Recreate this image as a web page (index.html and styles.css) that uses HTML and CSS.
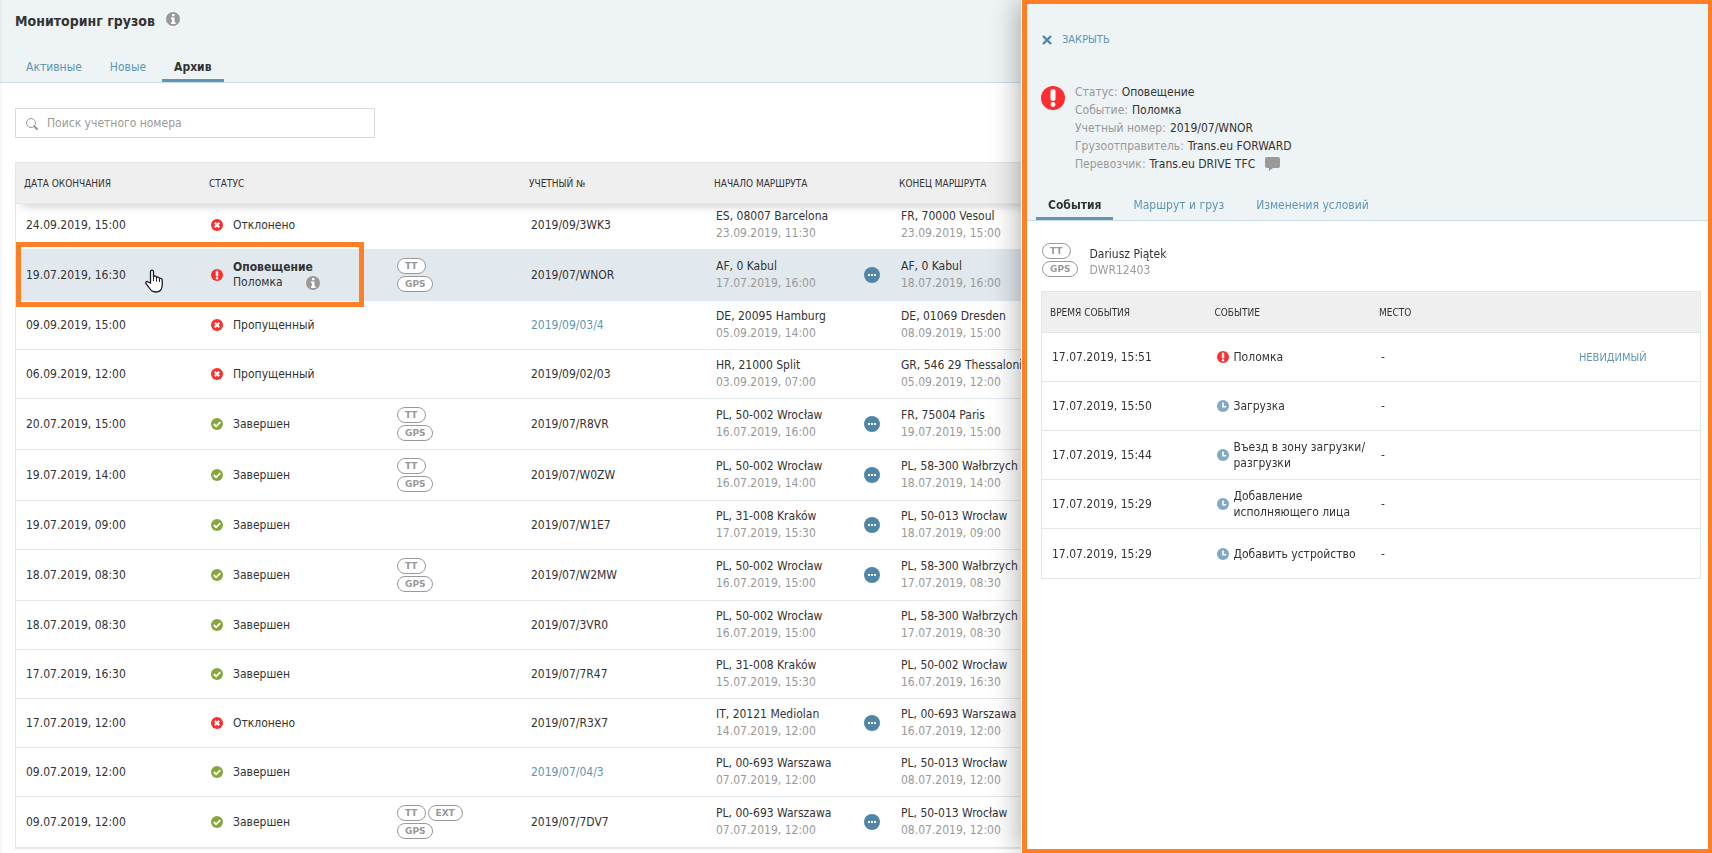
FILE: index.html
```
<!DOCTYPE html>
<html lang="ru">
<head>
    <meta charset="UTF-8">
    <meta name="viewport" content="width=device-width, initial-scale=1.0">
    <title>Мониторинг грузов</title>
    <link rel="stylesheet" href="styles.css">
</head>
<body>
    <!-- icons -->
    <svg class="sprite" aria-hidden="true">
        <symbol id="i-info" viewBox="0 0 14 14">
            <circle cx="7" cy="7" r="7" fill="#999"/>
            <path d="M6 2h2.5v2.2H6zM5 5.5h3.5v4.6h1V12H5v-1.9h1V7.2H5z" fill="#fff"/>
        </symbol>
        <symbol id="i-fail" viewBox="0 0 12 12">
            <circle cx="6" cy="6" r="6" fill="#ff2d2d"/>
            <path d="M3.8 3.800l4.400 4.400M8.200 3.800L3.800 8.200" stroke="#fff" stroke-width="2.200"/>
        </symbol>
        <symbol id="i-done" viewBox="0 0 12 12">
            <circle cx="6" cy="6" r="6" fill="#86a73c"/>
            <path d="M2.8 6l2.3 2.3 4.2-4.2" fill="none" stroke="#fff" stroke-width="1.8"/>
        </symbol>
        <symbol id="i-alert" viewBox="0 0 24 24">
            <circle cx="12" cy="12" r="12" fill="#ff2d2d"/>
            <rect x="9.5" y="3" width="5" height="12" rx="2.5" fill="#fff"/>
            <circle cx="12" cy="18.5" r="2.4" fill="#fff"/>
        </symbol>
        <symbol id="i-clock" viewBox="0 0 12 12">
            <circle cx="6" cy="6" r="6" fill="#81a9c3"/>
            <path d="M6 2.5v4.3h3.2" fill="none" stroke="#fff" stroke-width="1.6"/>
        </symbol>
        <symbol id="i-dots" viewBox="0 0 16 16">
            <circle cx="8" cy="8" r="8" fill="#5086a5"/>
            <path d="M4 7h2v2H4zM7 7h2v2H7zM10 7h2v2h-2z" fill="#fff"/>
        </symbol>
    </svg>

    <main class="monitor">
        <header class="page-header">
            <h1>Мониторинг грузов <svg class="icon info"><use href="#i-info"/></svg></h1>
            <nav class="tabs">
                <a href="#">Активные</a>
                <a href="#">Новые</a>
                <a href="#" class="active">Архив</a>
            </nav>
        </header>

        <div class="content">
            <label class="search">
                <svg viewBox="0 0 12 12"><circle cx="5" cy="5" r="4.5" fill="none" stroke="#999"/><path d="M8.2 8.2l3 3" stroke="#999" stroke-width="2" stroke-linecap="round"/></svg>
                <input type="text" placeholder="Поиск учетного номера" aria-label="Поиск учетного номера">
            </label>

            <table class="cargo">
                <colgroup>
                    <col class="col"><col class="col"><col class="col-tags"><col class="col"><col class="col-start"><col class="col-dots"><col>
                </colgroup>
                <thead>
                    <tr><th>Дата окончания</th><th>Статус</th><th></th><th>Учетный №</th><th>Начало маршрута</th><th></th><th>Конец маршрута</th></tr>
                </thead>
                <tbody>
                    <tr class="scrolled">
                        <td>24.09.2019, 15:00</td>
                        <td><div class="status"><svg class="icon"><use href="#i-fail"/></svg>Отклонено</div></td>
                        <td class="tags"></td>
                        <td>2019/09/3WK3</td>
                        <td>ES, 08007 Barcelona<small>23.09.2019, 11:30</small></td>
                        <td></td>
                        <td>FR, 70000 Vesoul<small>23.09.2019, 15:00</small></td>
                    </tr>
                    <tr class="selected">
                        <td class="marked">19.07.2019, 16:30
                            <svg class="cursor" viewBox="0 0 18 24"><path d="M5.5 14V2.8C5.5.6 8.5.6 8.5 2.8V8c0-1.5 3-1.5 3 .5V9c0-1.5 3-1.3 3 .7v.5c0-1.3 2.7-1.3 2.7.6V16c0 4-2 7-6.7 7-4 0-5.5-2.5-7-5.2L.9 14.5c-.8-1.6 1-2.7 2.2-1.5z" fill="#fff" stroke="#1b1b2a" stroke-width="1.3"/><path d="M8.5 8v4M11.5 9v3.5M14.5 10v3" stroke="#1b1b2a"/></svg>
                        </td>
                        <td><div class="status"><svg class="icon"><use href="#i-alert"/></svg><div class="reason"><b>Оповещение</b><span>Поломка <svg class="icon info"><use href="#i-info"/></svg></span></div></div></td>
                        <td class="tags"><span class="tag">TT</span><br><span class="tag">GPS</span></td>
                        <td>2019/07/WNOR</td>
                        <td>AF, 0 Kabul<small>17.07.2019, 16:00</small></td>
                        <td><svg class="dots"><use href="#i-dots"/></svg></td>
                        <td>AF, 0 Kabul<small>18.07.2019, 16:00</small></td>
                    </tr>
                    <tr>
                        <td>09.09.2019, 15:00</td>
                        <td><div class="status"><svg class="icon"><use href="#i-fail"/></svg>Пропущенный</div></td>
                        <td class="tags"></td>
                        <td><a href="#">2019/09/03/4</a></td>
                        <td>DE, 20095 Hamburg<small>05.09.2019, 14:00</small></td>
                        <td></td>
                        <td>DE, 01069 Dresden<small>08.09.2019, 15:00</small></td>
                    </tr>
                    <tr>
                        <td>06.09.2019, 12:00</td>
                        <td><div class="status"><svg class="icon"><use href="#i-fail"/></svg>Пропущенный</div></td>
                        <td class="tags"></td>
                        <td>2019/09/02/03</td>
                        <td>HR, 21000 Split<small>03.09.2019, 07:00</small></td>
                        <td></td>
                        <td>GR, 546 29 Thessaloniki<small>05.09.2019, 12:00</small></td>
                    </tr>
                    <tr>
                        <td>20.07.2019, 15:00</td>
                        <td><div class="status"><svg class="icon"><use href="#i-done"/></svg>Завершен</div></td>
                        <td class="tags"><span class="tag">TT</span><br><span class="tag">GPS</span></td>
                        <td>2019/07/R8VR</td>
                        <td>PL, 50-002 Wrocław<small>16.07.2019, 16:00</small></td>
                        <td><svg class="dots"><use href="#i-dots"/></svg></td>
                        <td>FR, 75004 Paris<small>19.07.2019, 15:00</small></td>
                    </tr>
                    <tr>
                        <td>19.07.2019, 14:00</td>
                        <td><div class="status"><svg class="icon"><use href="#i-done"/></svg>Завершен</div></td>
                        <td class="tags"><span class="tag">TT</span><br><span class="tag">GPS</span></td>
                        <td>2019/07/W0ZW</td>
                        <td>PL, 50-002 Wrocław<small>16.07.2019, 14:00</small></td>
                        <td><svg class="dots"><use href="#i-dots"/></svg></td>
                        <td>PL, 58-300 Wałbrzych<small>18.07.2019, 14:00</small></td>
                    </tr>
                    <tr>
                        <td>19.07.2019, 09:00</td>
                        <td><div class="status"><svg class="icon"><use href="#i-done"/></svg>Завершен</div></td>
                        <td class="tags"></td>
                        <td>2019/07/W1E7</td>
                        <td>PL, 31-008 Kraków<small>17.07.2019, 15:30</small></td>
                        <td><svg class="dots"><use href="#i-dots"/></svg></td>
                        <td>PL, 50-013 Wrocław<small>18.07.2019, 09:00</small></td>
                    </tr>
                    <tr>
                        <td>18.07.2019, 08:30</td>
                        <td><div class="status"><svg class="icon"><use href="#i-done"/></svg>Завершен</div></td>
                        <td class="tags"><span class="tag">TT</span><br><span class="tag">GPS</span></td>
                        <td>2019/07/W2MW</td>
                        <td>PL, 50-002 Wrocław<small>16.07.2019, 15:00</small></td>
                        <td><svg class="dots"><use href="#i-dots"/></svg></td>
                        <td>PL, 58-300 Wałbrzych<small>17.07.2019, 08:30</small></td>
                    </tr>
                    <tr>
                        <td>18.07.2019, 08:30</td>
                        <td><div class="status"><svg class="icon"><use href="#i-done"/></svg>Завершен</div></td>
                        <td class="tags"></td>
                        <td>2019/07/3VR0</td>
                        <td>PL, 50-002 Wrocław<small>16.07.2019, 15:00</small></td>
                        <td></td>
                        <td>PL, 58-300 Wałbrzych<small>17.07.2019, 08:30</small></td>
                    </tr>
                    <tr>
                        <td>17.07.2019, 16:30</td>
                        <td><div class="status"><svg class="icon"><use href="#i-done"/></svg>Завершен</div></td>
                        <td class="tags"></td>
                        <td>2019/07/7R47</td>
                        <td>PL, 31-008 Kraków<small>15.07.2019, 15:30</small></td>
                        <td></td>
                        <td>PL, 50-002 Wrocław<small>16.07.2019, 16:30</small></td>
                    </tr>
                    <tr>
                        <td>17.07.2019, 12:00</td>
                        <td><div class="status"><svg class="icon"><use href="#i-fail"/></svg>Отклонено</div></td>
                        <td class="tags"></td>
                        <td>2019/07/R3X7</td>
                        <td>IT, 20121 Mediolan<small>14.07.2019, 12:00</small></td>
                        <td><svg class="dots"><use href="#i-dots"/></svg></td>
                        <td>PL, 00-693 Warszawa<small>16.07.2019, 12:00</small></td>
                    </tr>
                    <tr>
                        <td>09.07.2019, 12:00</td>
                        <td><div class="status"><svg class="icon"><use href="#i-done"/></svg>Завершен</div></td>
                        <td class="tags"></td>
                        <td><a href="#">2019/07/04/3</a></td>
                        <td>PL, 00-693 Warszawa<small>07.07.2019, 12:00</small></td>
                        <td></td>
                        <td>PL, 50-013 Wrocław<small>08.07.2019, 12:00</small></td>
                    </tr>
                    <tr>
                        <td>09.07.2019, 12:00</td>
                        <td><div class="status"><svg class="icon"><use href="#i-done"/></svg>Завершен</div></td>
                        <td class="tags"><span class="tag">TT</span><span class="tag">EXT</span><br><span class="tag">GPS</span></td>
                        <td>2019/07/7DV7</td>
                        <td>PL, 00-693 Warszawa<small>07.07.2019, 12:00</small></td>
                        <td><svg class="dots"><use href="#i-dots"/></svg></td>
                        <td>PL, 50-013 Wrocław<small>08.07.2019, 12:00</small></td>
                    </tr>
                </tbody>
            </table>
        </div>
    </main>

    <aside class="panel">
        <header class="panel-header">
            <button type="button" class="close"><svg viewBox="0 0 10 10"><path d="M1 1l8 8M9 1L1 9" stroke="#5086a5" stroke-width="2.4"/></svg>Закрыть</button>
            <div class="summary">
                <svg class="alert-big"><use href="#i-alert"/></svg>
                <dl>
                    <div><dt>Статус:</dt><dd>Оповещение</dd></div>
                    <div><dt>Событие:</dt><dd>Поломка</dd></div>
                    <div><dt>Учетный номер:</dt><dd>2019/07/WNOR</dd></div>
                    <div><dt>Грузоотправитель:</dt><dd>Trans.eu FORWARD</dd></div>
                    <div><dt>Перевозчик:</dt><dd>Trans.eu DRIVE TFC <svg class="chat" viewBox="0 0 15 14"><path d="M2 0h11a2 2 0 0 1 2 2v7a2 2 0 0 1-2 2H8l-4 3v-3H2a2 2 0 0 1-2-2V2a2 2 0 0 1 2-2z" fill="#999"/></svg></dd></div>
                </dl>
            </div>
            <nav class="tabs">
                <a href="#" class="active">События</a>
                <a href="#">Маршрут и груз</a>
                <a href="#">Изменения условий</a>
            </nav>
        </header>

        <div class="panel-body">
            <div class="driver">
                <div class="tags"><span class="tag">TT</span><br><span class="tag">GPS</span></div>
                <p>Dariusz Piątek<small>DWR12403</small></p>
            </div>
            <table class="events">
                <thead>
                    <tr><th>Время события</th><th>Событие</th><th>Место</th><th></th></tr>
                </thead>
                <tbody>
                    <tr>
                        <td>17.07.2019, 15:51</td>
                        <td><div class="event"><svg class="icon"><use href="#i-alert"/></svg>Поломка</div></td>
                        <td>-</td>
                        <td class="action"><button type="button">Невидимый</button></td>
                    </tr>
                    <tr>
                        <td>17.07.2019, 15:50</td>
                        <td><div class="event"><svg class="icon"><use href="#i-clock"/></svg>Загрузка</div></td>
                        <td>-</td>
                        <td></td>
                    </tr>
                    <tr>
                        <td>17.07.2019, 15:44</td>
                        <td><div class="event"><svg class="icon"><use href="#i-clock"/></svg><span>Въезд в зону загрузки/<br>разгрузки</span></div></td>
                        <td>-</td>
                        <td></td>
                    </tr>
                    <tr>
                        <td>17.07.2019, 15:29</td>
                        <td><div class="event"><svg class="icon"><use href="#i-clock"/></svg><span>Добавление<br>исполняющего лица</span></div></td>
                        <td>-</td>
                        <td></td>
                    </tr>
                    <tr>
                        <td>17.07.2019, 15:29</td>
                        <td><div class="event"><svg class="icon"><use href="#i-clock"/></svg>Добавить устройство</div></td>
                        <td>-</td>
                        <td></td>
                    </tr>
                </tbody>
            </table>
        </div>
    </aside>
</body>
</html>
```
FILE: styles.css
```
* {
    margin: 0;
    padding: 0;
    box-sizing: border-box;
}

body {
    min-height: 100vh;
    overflow: hidden;
    background: #fff;
    color: #333;
    font-family: "DejaVu Sans Condensed", "DejaVu Sans", sans-serif;
    font-size: 12px;
    line-height: 17px;
}

a {
    color: #6096b4;
    text-decoration: none;
}

button {
    background: none;
    border: none;
    color: #6096b4;
    font: inherit;
    text-transform: uppercase;
    cursor: pointer;
}

.sprite {
    position: absolute;
    width: 0;
    height: 0;
}

.icon {
    flex: none;
    width: 12px;
    height: 12px;
}

.icon.info {
    width: 14px;
    height: 14px;
}

small {
    display: block;
    color: #999;
    font-size: 12px;
}

/* page */
.monitor {
    min-height: 100vh;
    box-shadow: inset 3px 0 3px -2px rgba(0, 0, 0, 0.06);
}

.page-header {
    padding: 12px 14px 0;
    background: #eef3f6;
    border-bottom: 1px solid #c9dde7;
    box-shadow: inset 3px 0 3px -2px rgba(0, 0, 0, 0.06);
}

h1 {
    display: flex;
    gap: 11px;
    height: 46px;
    padding-left: 1px;
    font-size: 14px;
    line-height: 18px;
}

.tabs {
    display: flex;
}

.tabs a {
    height: 24px;
    padding: 1px 12px 0;
    border-bottom: 3px solid transparent;
}

.tabs .active {
    border-color: #6096b4;
    color: #333;
    font-weight: bold;
}

.page-header .tabs {
    gap: 4px;
}

.content {
    padding: 25px 15px 0;
}

.search {
    display: flex;
    align-items: center;
    width: 360px;
    height: 30px;
    padding: 1px 10px 0;
    border: 1px solid #d8d8d8;
    border-radius: 1px;
}

.search svg {
    width: 12px;
    height: 12px;
    margin-right: 9px;
}

.search input {
    flex: 1;
    border: none;
    outline: none;
    font: inherit;
}

.search input::placeholder {
    color: #999;
}

/* tables */
table {
    width: 100%;
    border: 1px solid #e1e8ed;
    border-spacing: 0;
    table-layout: fixed;
}

th {
    height: 41px;
    padding: 0 8px;
    background: #efefef;
    border-bottom: 1px solid #e1e8ed;
    font-size: 10px;
    font-weight: normal;
    text-align: left;
    text-transform: uppercase;
    white-space: nowrap;
}

td {
    height: 49px;
    padding: 7px 10px;
    border-bottom: 1px solid #e1e8ed;
    white-space: nowrap;
}

.cargo {
    margin-top: 24px;
}

.cargo thead {
    position: relative;
    z-index: 1;
    box-shadow: 0 8px 10px -6px rgba(0, 0, 0, 0.2);
}

.col {
    width: 185px;
}

.col-tags {
    width: 135px;
}

.col-start {
    width: 148px;
}

.col-dots {
    width: 37px;
}

.scrolled td {
    height: 46px;
    padding-top: 4px;
    border-color: #e1e8ee;
}

.selected td {
    background: #e1e8ee;
}

.status {
    display: flex;
    align-items: center;
    gap: 10px;
}

.reason {
    line-height: 15px;
}

.reason b,
.reason span {
    display: block;
}

.reason .info {
    margin: 0 0 -4px 20px;
}

.tags {
    line-height: 0;
}

td.tags {
    padding: 8px 10px 6px 11px;
}

.tag {
    display: inline-block;
    height: 16px;
    margin: 0 2px 2px 0;
    padding: 0 7px;
    border: 1px solid #999;
    border-radius: 8px;
    background: #fff;
    color: #999;
    font: bold 9px/14px "DejaVu Sans", sans-serif;
    vertical-align: top;
}

.dots {
    display: block;
    width: 16px;
    height: 16px;
}

/* frame round the date and status of the selected row */
.marked {
    position: relative;
}

.marked::after {
    content: "";
    position: absolute;
    top: -8px;
    left: 0;
    box-sizing: border-box;
    width: 348px;
    height: 65px;
    border: 5px solid #ff7f27;
}

.cursor {
    position: absolute;
    top: 19px;
    left: 129px;
    width: 18px;
    height: 24px;
}

/* side panel */
.panel {
    position: fixed;
    top: 0;
    right: 0;
    bottom: 0;
    z-index: 2;
    width: 40%;
    min-width: 690px;
    border: 4px solid #ff7f27;
    border-left-width: 5px;
    background: #fff;
    box-shadow: -1px 0 0 #fff, -4px 0 26px rgba(0, 0, 0, 0.3);
}

.panel-header {
    padding: 27px 9px 0;
    background: #eef3f6;
    border-bottom: 1px solid #c9dde7;
}

.close {
    display: flex;
    align-items: center;
    gap: 10px;
    margin-left: 6px;
    font-size: 11px;
}

.close svg {
    width: 10px;
    height: 10px;
}

.summary {
    display: flex;
    gap: 10px;
    padding: 35px 5px 0;
}

.alert-big {
    width: 24px;
    height: 24px;
    margin-top: 3px;
}

.summary dl {
    line-height: 18px;
}

.summary dl div {
    display: flex;
    gap: 4px;
}

dt {
    color: #999;
}

.chat {
    width: 15px;
    height: 14px;
    margin: 0 0 -3px 6px;
}

.panel .tabs {
    gap: 8px;
    margin-top: 23px;
}

.panel-body {
    padding: 22px 7px 0 14px;
}

.driver {
    display: flex;
    gap: 9px;
    height: 48px;
    padding-left: 1px;
    line-height: 16px;
}

.driver p {
    padding-top: 3px;
}

.events td {
    padding: 0 10px;
    line-height: 16px;
}

.events tr:last-child td {
    border-bottom: none;
}

.event {
    display: flex;
    align-items: center;
    gap: 5px;
}

.events .action {
    padding-right: 20px;
    text-align: center;
}

.action button {
    font-size: 11px;
}
```
